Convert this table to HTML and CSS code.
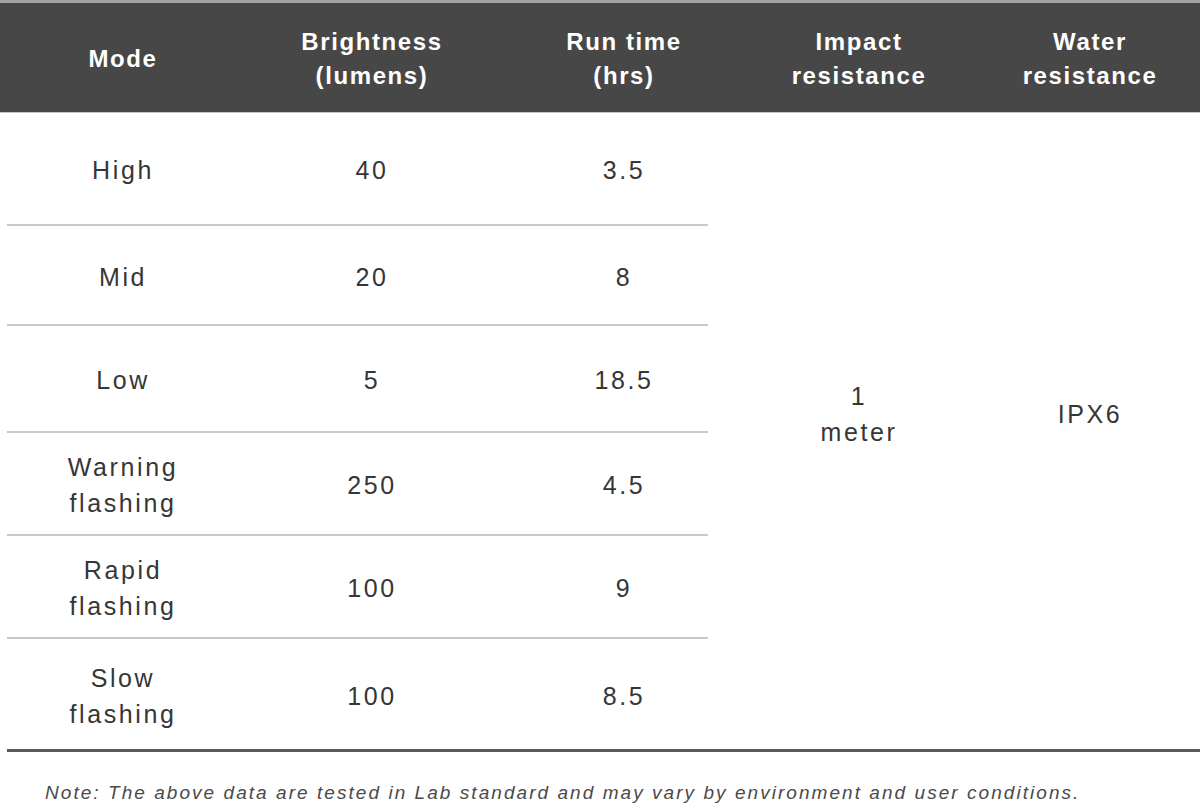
FILE: index.html
```html
<!DOCTYPE html>
<html>
<head>
<meta charset="utf-8">
<link rel="stylesheet" href="styles.css">
</head>
<body>
<div class="spec">
  <div class="head">
    <div class="hcell">Mode</div>
    <div class="hcell">Brightness<br>(lumens)</div>
    <div class="hcell">Run time<br>(hrs)</div>
    <div class="hcell">Impact<br>resistance</div>
    <div class="hcell water">Water<br>resistance</div>
  </div>
  <div class="body">
    <div class="left">
      <div class="row r1"><div class="cell">High</div><div class="cell">40</div><div class="cell">3.5</div></div>
      <div class="sep"></div>
      <div class="row r2"><div class="cell">Mid</div><div class="cell">20</div><div class="cell">8</div></div>
      <div class="sep"></div>
      <div class="row r3"><div class="cell">Low</div><div class="cell">5</div><div class="cell">18.5</div></div>
      <div class="sep"></div>
      <div class="row r4"><div class="cell">Warning<br>flashing</div><div class="cell">250</div><div class="cell">4.5</div></div>
      <div class="sep"></div>
      <div class="row r5"><div class="cell">Rapid<br>flashing</div><div class="cell">100</div><div class="cell">9</div></div>
      <div class="sep"></div>
      <div class="row r6"><div class="cell">Slow<br>flashing</div><div class="cell">100</div><div class="cell">8.5</div></div>
    </div>
    <div class="merged impact">1<br>meter</div>
    <div class="merged water">IPX6</div>
  </div>
  <div class="rule"></div>
</div>
<p class="note">Note: The above data are tested in Lab standard and may vary by environment and user conditions.</p>
</body>
</html>
```

FILE: styles.css
```css
html, body {
  margin: 0;
  padding: 0;
  background: #ffffff;
}
body {
  width: 1200px;
  height: 806px;
  overflow: hidden;
  font-family: "Liberation Sans", Arial, sans-serif;
}
.spec {
  width: 1200px;
}
.head {
  display: grid;
  grid-template-columns: 246px 252px 252px 218px 232px;
  height: 109px;
  background: #474747;
  border-top: 3px solid #a3a3a3;
  border-bottom: 1px solid #c4c4c4;
  color: #ffffff;
  font-weight: bold;
  font-size: 24px;
  letter-spacing: 1.6px;
  line-height: 34px;
}
.hcell {
  display: flex;
  align-items: center;
  justify-content: center;
  text-align: center;
  padding-top: 2px;
}
.hcell.water {
  padding-left: 12px;
}
.body {
  display: grid;
  grid-template-columns: 750px 218px 232px;
  color: #363636;
  font-size: 25px;
  letter-spacing: 2.6px;
  line-height: 36px;
}
.left {
  display: flex;
  flex-direction: column;
}
.row {
  display: grid;
  grid-template-columns: 246px 252px 252px;
}
.r1 { height: 111px; }
.r2 { height: 98px; }
.r3 { height: 105px; }
.r4 { height: 101px; }
.r5 { height: 101px; }
.r6 { height: 110px; }
.cell {
  display: flex;
  align-items: center;
  justify-content: center;
  text-align: center;
  padding-top: 3px;
}
.sep {
  height: 2px;
  margin: 0 42px 0 7px;
  background: #c8c8c8;
}
.merged {
  display: flex;
  align-items: center;
  justify-content: center;
  text-align: center;
  padding-bottom: 34px;
}
.merged.water {
  padding-left: 12px;
}
.rule {
  height: 3px;
  margin-left: 7px;
  background: #5a5a5a;
}
.note {
  margin: 29px 0 0 45px;
  font-size: 19px;
  font-style: italic;
  color: #4a4a4a;
  letter-spacing: 2.05px;
  line-height: 24px;
  white-space: nowrap;
}
```
